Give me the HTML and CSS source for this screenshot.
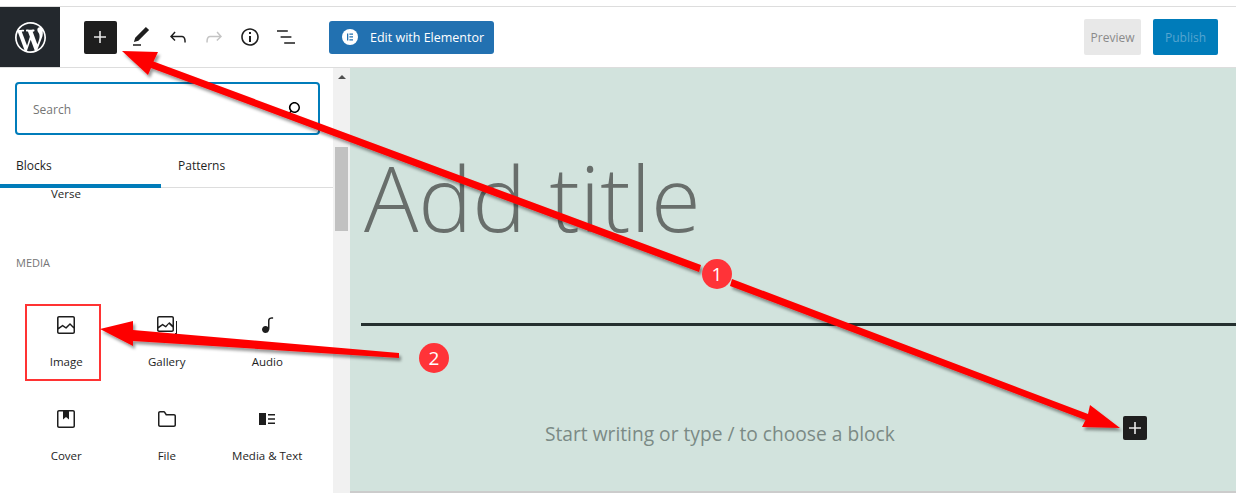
FILE: index.html
```html
<!DOCTYPE html>
<html lang="en">
<head>
  <meta charset="UTF-8">
  <title>Add New Post</title>
  <link rel="stylesheet" href="styles.css">
</head>
<body>
  <div class="page">
    <header class="topbar">
      <a class="wp-logo">
        <svg viewBox="0 0 20 20" width="31" height="31"><path fill="#fff" d="M20 10c0-5.51-4.49-10-10-10C4.48 0 0 4.49 0 10c0 5.52 4.48 10 10 10 5.51 0 10-4.48 10-10zM7.78 15.37L4.37 6.22c.55-.02 1.17-.08 1.17-.08.5-.06.44-1.13-.06-1.11 0 0-1.45.11-2.37.11-.18 0-.37 0-.58-.01C4.12 2.69 6.87 1.11 10 1.11c2.33 0 4.45.87 6.05 2.34-.68-.11-1.65.39-1.65 1.58 0 .74.45 1.36.9 2.1.35.61.55 1.36.55 2.46 0 1.49-1.4 5-1.4 5l-3.03-8.37c.54-.02.82-.17.82-.17.5-.05.44-1.25-.06-1.22 0 0-1.44.12-2.38.12-.87 0-2.33-.12-2.33-.12-.5-.03-.56 1.2-.06 1.22l.92.08 1.26 3.41zM17.41 10c.24-.64.74-1.87.43-4.25.7 1.29 1.05 2.71 1.05 4.25 0 3.29-1.73 6.24-4.4 7.78.97-2.59 1.94-5.2 2.92-7.78zM6.1 18.09C3.12 16.65 1.11 13.53 1.11 10c0-1.3.23-2.48.72-3.59C3.25 10.3 4.67 14.2 6.1 18.09zm4.03-6.63l2.58 6.98c-.86.29-1.76.45-2.71.45-.79 0-1.57-.11-2.29-.33.81-2.38 1.62-4.74 2.42-7.1z"/></svg>
      </a>
      <div class="tools">
        <button class="add-btn">
          <svg viewBox="0 0 24 24" width="24" height="24"><path fill="#e8e8e8" d="M18 11.2h-5.2V6h-1.6v5.2H6v1.6h5.2V18h1.6v-5.2H18z"/></svg>
        </button>
        <svg class="tool" viewBox="0 0 24 24"><path d="M20.1 5.1L16.9 2 6.2 12.7l-1.3 4.4 4.5-1.3L20.1 5.1zM4 20.8h8v-1.5H4v1.5z"/></svg>
        <svg class="tool" viewBox="0 0 24 24"><path d="M18.3 11.7c-.6-.6-1.4-.9-2.3-.9H6.7l2.9-3.3-1.1-1-4.5 5L8.5 16l1-1-2.7-2.7H16c.5 0 .9.2 1.3.5 1 1 1 3.4 1 4.5v.3h1.5v-.2c0-1.5 0-4.3-1.5-5.7z"/></svg>
        <svg class="tool tool-off" viewBox="0 0 24 24"><path d="M15.6 6.5l-1.1 1 2.9 3.3H8c-.9 0-1.7.3-2.3.9-1.4 1.5-1.4 4.2-1.4 5.6v.2h1.5v-.3c0-1.1 0-3.5 1-4.5.3-.3.7-.5 1.3-.5h9.2L14.3 15l1.1 1.1 4.6-4.6-4.4-5z"/></svg>
        <svg class="tool" viewBox="0 0 24 24"><path d="M12 3.2c-4.8 0-8.8 3.9-8.8 8.8 0 4.8 3.9 8.8 8.8 8.8 4.8 0 8.8-3.9 8.8-8.8 0-4.8-4-8.8-8.8-8.8zm0 16c-4 0-7.2-3.3-7.2-7.2C4.8 8 8 4.8 12 4.8s7.2 3.3 7.2 7.2c0 4-3.2 7.2-7.2 7.2zM11 17h2v-6h-2v6zm0-8h2V7h-2v2z"/></svg>
        <svg class="tool" viewBox="0 0 24 24"><path d="M13.8 5.2H3v1.5h10.8V5.2zm-3.6 12v1.5H21v-1.5H10.2zm7.2-6H6.6v1.5h10.8v-1.5z"/></svg>
      </div>
      <button class="elementor-btn">
        <svg viewBox="0 0 16 16" width="16" height="16"><circle cx="8" cy="8" r="8" fill="#fff"/><path fill="#2271b1" d="M5 4.5h1.3v7H5zM7.4 4.5h3.6v1.3H7.4zM7.4 7.3h3.6v1.3H7.4zM7.4 10.2h3.6v1.3H7.4z"/></svg>
        Edit with Elementor
      </button>
      <div class="publish-group">
        <button class="preview-btn">Preview</button>
        <button class="publish-btn">Publish</button>
      </div>
    </header>

    <main class="workspace">
      <aside class="inserter">
        <div class="search-box">
          <span class="search-text">Search</span>
          <svg viewBox="0 0 24 24" width="24" height="24"><path d="M13.5 6C10.5 6 8 8.5 8 11.5c0 1.1.3 2.1.9 3l-3.4 3 1 1.1 3.4-2.9c1 .9 2.2 1.4 3.6 1.4 3 0 5.5-2.5 5.5-5.5C19 8.5 16.5 6 13.5 6zm0 9.5c-2.2 0-4-1.8-4-4s1.8-4 4-4 4 1.8 4 4-1.8 4-4 4z"/></svg>
        </div>
        <div class="tabs">
          <div class="tab tab-active">Blocks</div>
          <div class="tab">Patterns</div>
        </div>
        <div class="block-list">
          <div class="verse-row"><span class="block-name">Verse</span></div>
          <h2 class="group-title">MEDIA</h2>
          <div class="block-grid">
            <div class="block-item">
              <svg class="block-icon" viewBox="0 0 24 24"><path d="M19 3H5c-1.1 0-2 .9-2 2v14c0 1.1.9 2 2 2h14c1.1 0 2-.9 2-2V5c0-1.1-.9-2-2-2zM5 4.5h14c.3 0 .5.2.5.5v8.4l-3-2.9c-.3-.3-.8-.3-1 0L11.9 14 9 12c-.3-.2-.6-.2-.8 0l-3.6 2.6V5c-.1-.3.1-.5.4-.5zm14 15H5c-.3 0-.5-.2-.5-.5v-2.4l4.1-3 3 1.9c.3.2.7.2.9-.1L16 12l3.5 3.4V19c0 .3-.2.5-.5.5z"/></svg>
              <span class="block-name">Image</span>
            </div>
            <div class="block-item">
              <svg class="block-icon" viewBox="0 0 24 24"><path d="M17 3H4c-1.1 0-2 .9-2 2v12c0 1.1.9 2 2 2h13c1.1 0 2-.9 2-2V5c0-1.1-.9-2-2-2zM4 4.5h13c.3 0 .5.2.5.5v7l-2.6-2.5c-.3-.3-.8-.3-1 0L10.600 12.800 8 11c-.3-.2-.6-.2-.8 0l-3.700 2.600V5c0-.3.2-.5.5-.5zm13 13H4c-.3 0-.5-.2-.5-.5v-1.500l4.100-3 2.700 1.800c.3.200.7.200.9-.1l2.700-3.200 3.600 3.500V17c0 .3-.2.500-.5.500zM21 8h1v13h-2v-1h1z"/></svg>
              <span class="block-name">Gallery</span>
            </div>
            <div class="block-item">
              <svg class="block-icon" viewBox="0 0 24 24"><path d="M17.700 4.300c-1.200 0-2.800 0-3.800 1-.6.600-.9 1.500-.9 2.600V14c-.6-.6-1.500-1-2.500-1C8.600 13 7 14.600 7 16.500S8.600 20 10.500 20c1.500 0 2.800-1 3.300-2.300.5-.8.700-1.800.700-2.700V7.900c0-.7.200-1.200.5-1.600.6-.6 1.800-.6 2.800-.6h.3V4.300h-.4z"/></svg>
              <span class="block-name">Audio</span>
            </div>
            <div class="block-item">
              <svg class="block-icon" viewBox="0 0 24 24"><path d="M19 3H5c-1.100 0-2 .9-2 2v14c0 1.100.9 2 2 2h14c1.100 0 2-.9 2-2V5c0-1.100-.9-2-2-2zm.5 16c0 .3-.2.500-.5.500H5c-.3 0-.5-.2-.5-.5V5c0-.3.2-.500.500-.500h4v8l3-2.500 3 2.500v-8h4c.3 0 .5.200.5.500v14z"/></svg>
              <span class="block-name">Cover</span>
            </div>
            <div class="block-item">
              <svg class="block-icon" viewBox="0 0 24 24"><path d="M19 7h-7.300L10 4.600c-.2-.4-.6-.6-1-.6H5c-1.100 0-2 .9-2 2v12c0 1.100.9 2 2 2h14c1.100 0 2-.9 2-2V9c0-1.100-.9-2-2-2zm.5 11c0 .3-.2.500-.5.500H5c-.3 0-.5-.2-.5-.5V6c0-.3.2-.500.500-.500h3.900l1.900 3h8.200c.3 0 .5.200.5.500v9z"/></svg>
              <span class="block-name">File</span>
            </div>
            <div class="block-item">
              <svg class="block-icon" viewBox="0 0 24 24"><path d="M4 6h7v12H4zM13 7h7v1.500h-7zM13 11.200h7v1.500h-7zM13 15.500h7V17h-7z"/></svg>
              <span class="block-name">Media &amp; Text</span>
            </div>
          </div>
        </div>
      </aside>

      <div class="scrollbar">
        <span class="scroll-up"></span>
        <span class="scroll-thumb"></span>
      </div>

      <section class="canvas">
        <h1 class="post-title">Add title</h1>
        <hr class="title-rule">
        <div class="start-row">
          <span class="start-text">Start writing or type / to choose a block</span>
          <button class="add-small">
            <svg viewBox="0 0 24 24" width="24" height="24"><path fill="#e8e8e8" d="M18 11.200h-5.200V6h-1.600v5.200H6v1.600h5.200V18h1.600v-5.200H18z"/></svg>
          </button>
        </div>
      </section>
    </main>

    <!-- annotations on top of the screenshot -->
    <div class="image-mark"></div>
    <svg class="arrows" viewBox="0 0 1236 493" width="1236" height="493">
      <defs>
        <filter id="arrow-shadow" x="-5%" y="-5%" width="110%" height="110%">
          <feDropShadow dx="2" dy="3" stdDeviation="1.500" flood-color="#000" flood-opacity="0.4"/>
        </filter>
      </defs>
      <g fill="#fe0000" filter="url(#arrow-shadow)">
        <path d="M122 51L158 52 153.500 61.500 701 265 699 272 151 68 148 75z"/>
        <path d="M732 279L1088 414 1090 405 1120 428 1082 427 1085.500 420 730 286z"/>
        <path d="M100 329L133 321 133 330 399 353 399 358 133 341 133 346z"/>
      </g>
    </svg>
    <span class="step-badge step-one">1</span>
    <span class="step-badge step-two">2</span>
  </div>
</body>
</html>
```

FILE: styles.css
```css
* {
  box-sizing: border-box;
}
html, body {
  margin: 0;
  height: 100%;
  overflow: hidden;
}
body {
  font-family: 'Open Sans', 'Noto Sans', Arial, sans-serif;
  font-size: 12px;
  color: #1e1e1e;
  background: #fff;
}
button {
  font-family: inherit;
  border: none;
  cursor: pointer;
}
.page {
  position: relative;
  width: 1236px;
  height: 493px;
  padding-top: 6px;
  display: flex;
  flex-direction: column;
}

/* top bar */
.topbar {
  height: 62px;
  display: flex;
  align-items: center;
  border-top: 1px solid #ddd;
  border-bottom: 1px solid #ddd;
  padding-right: 18px;
}
.wp-logo {
  width: 60px;
  height: 60px;
  background: #23282d;
  display: flex;
  align-items: center;
  justify-content: center;
}
.tools {
  display: flex;
  align-items: center;
  gap: 12px;
  margin-left: 24px;
}
.add-btn {
  width: 33px;
  height: 33px;
  padding: 0 1px 1px 0;
  background: #1e1e1e;
  border-radius: 2px;
  display: flex;
  align-items: center;
  justify-content: center;
}
.tool {
  width: 24px;
  height: 24px;
  fill: #1e1e1e;
}
.tool:nth-child(n+3) {
  margin-left: 1px;
  margin-right: -1px;
}
.tool-off {
  fill: #c4c4c4;
}
.elementor-btn {
  margin-left: 32px;
  width: 165px;
  height: 33px;
  padding: 0 0 0 13px;
  background: #2271b1;
  color: #fff;
  font-size: 12.500px;
  font-weight: 500;
  border-radius: 3px;
  display: flex;
  align-items: center;
  gap: 12px;
}
.publish-group {
  margin-left: auto;
  display: flex;
  gap: 12px;
}
.preview-btn, .publish-btn {
  height: 36px;
  font-size: 12px;
  padding: 0;
  border-radius: 2px;
}
.preview-btn {
  width: 57px;
  background: #e8e8e8;
  color: #8a8a8a;
}
.publish-btn {
  width: 65px;
  background: #007cba;
  color: #56a5d0;
}

/* main area */
.workspace {
  flex: 1;
  display: flex;
  min-height: 0;
}
.inserter {
  width: 333px;
  overflow: hidden;
}
.search-box {
  margin: 14px 13px 0 15px;
  height: 53px;
  border: 2px solid #007cba;
  border-radius: 4px;
  padding: 0 12px 0 16px;
  display: flex;
  align-items: center;
  justify-content: space-between;
}
.search-text {
  color: #757575;
  font-size: 12px;
  margin-top: 2px;
}
.search-box svg {
  transform: rotate(90deg) scaleX(-1);
}
.tabs {
  display: flex;
  height: 53px;
  border-bottom: 1px solid #ddd;
}
.tab {
  width: 161px;
  padding: 22px 0 0 17px;
  font-size: 12px;
  font-weight: 500;
  color: #1e1e1e;
}
.tab-active {
  padding-left: 16px;
  border-bottom: 4px solid #007cba;
  margin-bottom: -1px;
}
.block-list {
  height: 305px;
}
.verse-row {
  width: 132px;
  height: 12px;
  line-height: 12px;
  text-align: center;
}
.verse-row .block-name {
  line-height: 12px;
}
.group-title {
  margin: 55px 0 0 16px;
  font-size: 11px;
  line-height: 16px;
  font-weight: 400;
  color: #757575;
}
.block-grid {
  display: grid;
  grid-template-columns: repeat(3, 100.500px);
  grid-auto-rows: 94px;
  margin: 36px 0 0 16px;
}
.block-item {
  display: flex;
  flex-direction: column;
  align-items: center;
  padding-top: 6px;
}
.block-icon {
  width: 24px;
  height: 24px;
  fill: #1e1e1e;
  margin-bottom: 17px;
}
.block-name {
  font-size: 11.500px;
  line-height: 16px;
  color: #1e1e1e;
}
.scrollbar {
  width: 17px;
  background: #f1f1f1;
  display: flex;
  flex-direction: column;
  align-items: center;
}
.scroll-up {
  margin-top: 7px;
  width: 0;
  height: 0;
  border-left: 4px solid transparent;
  border-right: 4px solid transparent;
  border-bottom: 4px solid #505050;
}
.scroll-thumb {
  margin-top: 68px;
  width: 13px;
  height: 84px;
  background: #c1c1c1;
}

/* editor canvas */
.canvas {
  flex: 1;
  background: #d2e3dd;
  border-bottom: 2px solid #cccccc;
  padding-left: 11px;
  min-width: 0;
}
.post-title {
  margin: 66px 0 0 3px;
  height: 127px;
  font-size: 90.500px;
  line-height: 127px;
  font-weight: 300;
  color: #686e6b;
}
.title-rule {
  margin: 62px 0 0;
  height: 3px;
  border: none;
  background: #25302f;
}
.start-row {
  display: flex;
  align-items: center;
  justify-content: space-between;
  margin-top: 90px;
  padding: 0 89px 0 184px;
  height: 24px;
}
.start-text {
  font-size: 19.200px;
  color: #7b8a85;
  position: relative;
  top: 5px;
}
.add-small {
  width: 24px;
  height: 24px;
  padding: 0;
  background: #1e1e1e;
  border-radius: 2px;
}

/* annotations */
.arrows {
  position: absolute;
  left: 0;
  top: 0;
  pointer-events: none;
}
.image-mark {
  position: absolute;
  left: 25px;
  top: 304px;
  width: 76px;
  height: 77px;
  border: 2px solid #ff3333;
}
.step-badge {
  position: absolute;
  width: 30px;
  height: 30px;
  border-radius: 50%;
  background: #ff3338;
  color: #fff;
  font-size: 19px;
  line-height: 30px;
  text-align: center;
}
.step-one {
  left: 702px;
  top: 259px;
}
.step-two {
  left: 419px;
  top: 343px;
}
```
